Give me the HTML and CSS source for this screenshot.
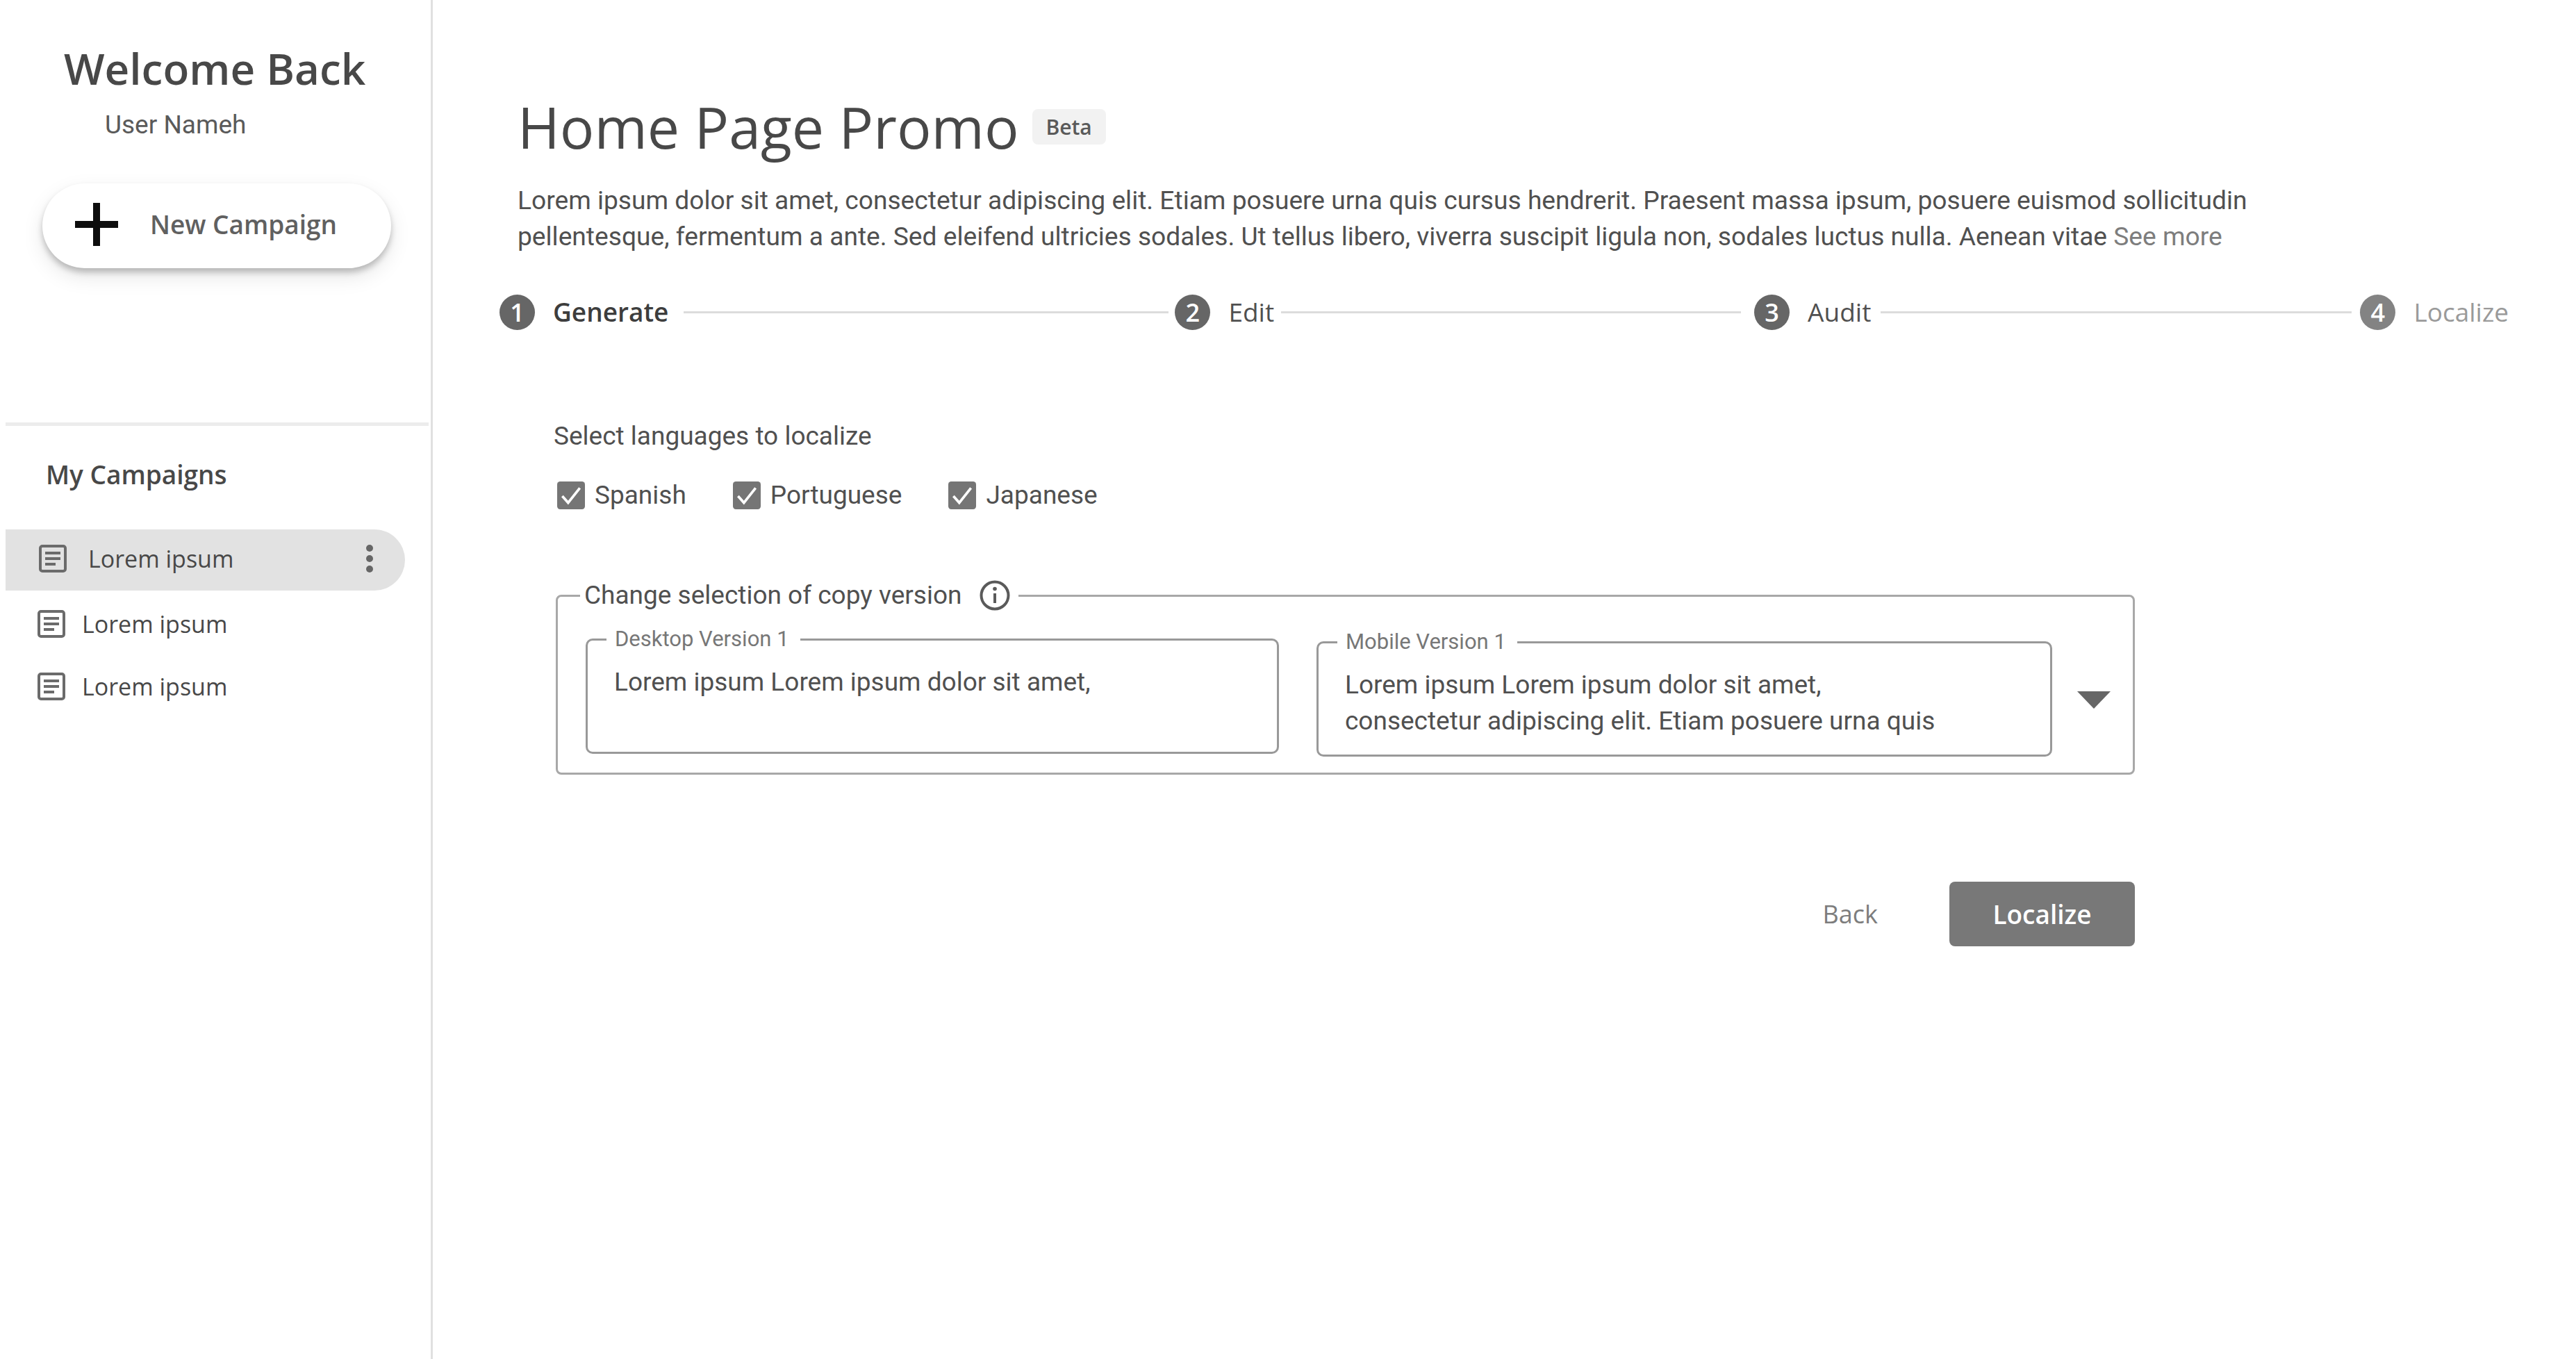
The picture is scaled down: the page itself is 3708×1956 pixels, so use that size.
FILE: index.html
```html
<!DOCTYPE html>
<html lang="en">
<head>
<meta charset="utf-8">
<title>Home Page Promo</title>
<link rel="stylesheet" href="styles.css">
</head>
<body>
<div class="app">
  <aside class="sidebar">
    <h2 class="welcome">Welcome Back</h2>
    <p class="user">User Nameh</p>
    <button class="new-btn">
      <svg class="plus" viewBox="0 0 62 62"><path d="M26 0h10v26h26v10H36v26H26V36H0V26h26z"/></svg>
      <span>New Campaign</span>
    </button>
    <hr class="side-rule">
    <h3 class="side-title">My Campaigns</h3>
    <ul class="campaigns">
      <li class="campaign active">
        <svg class="doc" viewBox="0 0 40 40"><rect x="2" y="2" width="36" height="36" rx="3"/><path d="M9 12h22M9 20h22M9 28h15"/></svg>
        <span>Lorem ipsum</span>
        <svg class="dots" viewBox="0 0 12 42"><circle cx="6" cy="6" r="5"/><circle cx="6" cy="21" r="5"/><circle cx="6" cy="36" r="5"/></svg>
      </li>
      <li class="campaign">
        <svg class="doc" viewBox="0 0 40 40"><rect x="2" y="2" width="36" height="36" rx="3"/><path d="M9 12h22M9 20h22M9 28h15"/></svg>
        <span>Lorem ipsum</span>
      </li>
      <li class="campaign">
        <svg class="doc" viewBox="0 0 40 40"><rect x="2" y="2" width="36" height="36" rx="3"/><path d="M9 12h22M9 20h22M9 28h15"/></svg>
        <span>Lorem ipsum</span>
      </li>
    </ul>
  </aside>
  <main class="main">
    <div class="title-row">
      <h1 class="title">Home Page Promo</h1>
      <span class="badge">Beta</span>
    </div>
    <p class="intro">Lorem ipsum dolor sit amet, consectetur adipiscing elit. Etiam posuere urna quis cursus hendrerit. Praesent massa ipsum, posuere euismod sollicitudin<br>pellentesque, fermentum a ante. Sed eleifend ultricies sodales. Ut tellus libero, viverra suscipit ligula non, sodales luctus nulla. Aenean vitae <a class="more">See more</a></p>
    <ol class="stepper">
      <li class="step current"><b class="num">1</b><span>Generate</span></li>
      <li class="line line-a"></li>
      <li class="step"><b class="num">2</b><span>Edit</span></li>
      <li class="line line-b"></li>
      <li class="step"><b class="num">3</b><span>Audit</span></li>
      <li class="line line-c"></li>
      <li class="step todo"><b class="num">4</b><span>Localize</span></li>
    </ol>
    <section class="panel">
      <p class="select-label">Select languages to localize</p>
      <div class="checks">
        <label class="check"><svg class="box" viewBox="0 0 38 38"><rect width="38" height="38" rx="4"/><path d="M7 20l8 9L31 9"/></svg>Spanish</label>
        <label class="check"><svg class="box" viewBox="0 0 38 38"><rect width="38" height="38" rx="4"/><path d="M7 20l8 9L31 9"/></svg>Portuguese</label>
        <label class="check"><svg class="box" viewBox="0 0 38 38"><rect width="38" height="38" rx="4"/><path d="M7 20l8 9L31 9"/></svg>Japanese</label>
      </div>
      <fieldset class="outer">
        <legend class="outer-legend">Change selection of copy version
          <svg class="info" viewBox="0 0 44 44"><circle cx="22" cy="22" r="19.5"/><path d="M22 19v14"/><circle class="info-dot" cx="22" cy="12.500" r="2.800"/></svg>
        </legend>
        <div class="versions">
          <fieldset class="field desktop">
            <legend class="field-legend">Desktop Version 1</legend>
            <p class="field-text">Lorem ipsum Lorem ipsum dolor sit amet,</p>
          </fieldset>
          <fieldset class="field mobile">
            <legend class="field-legend">Mobile Version 1</legend>
            <p class="field-text">Lorem ipsum Lorem ipsum dolor sit amet,<br>consectetur adipiscing elit. Etiam posuere urna quis</p>
          </fieldset>
          <span class="caret"></span>
        </div>
      </fieldset>
      <div class="actions">
        <button class="back">Back</button>
        <button class="primary">Localize</button>
      </div>
    </section>
  </main>
</div>
</body>
</html>
```
FILE: styles.css
```css
* { box-sizing: border-box; }
html, body { margin: 0; padding: 0; background: #fff; }
body { font-family: "Roboto", "Liberation Sans", sans-serif; color: #444; }
h1, h2, h3, p, ul, ol { margin: 0; padding: 0; list-style: none; }
button { font: inherit; border: 0; background: none; padding: 0; }

.app { display: flex; width: 3708px; height: 1956px; overflow: hidden; }

.sidebar { width: 623px; flex: none; border-right: 3px solid #e0e0e0; padding-top: 63px; }
.welcome { font: 600 62px/70px "Open Sans", sans-serif; color: #484848; padding-left: 92px; white-space: nowrap; }
.user { font: 400 37px/44px "Roboto", sans-serif; color: #5a5a5a; padding-left: 151px; margin-top: 25px; }
.new-btn { display: flex; align-items: center; width: 502px; height: 122px; margin: 62px 0 0 61px; padding: 0 0 4px 47px; border-radius: 61px; background: #fff; box-shadow: 0 6px 8px rgba(0,0,0,.22), 0 12px 30px rgba(0,0,0,.1); font: 600 37px/50px "Open Sans", sans-serif; color: #606060; }
.plus { width: 62px; height: 62px; fill: #0d0d0d; margin-right: 46px; flex: none; }
.side-rule { height: 5px; border: 0; background: #ececec; margin: 222px 3px 0 8px; }
.side-title { font: 600 37px/50px "Open Sans", sans-serif; color: #484848; margin: 45px 0 0 66px; }
.campaigns { margin-top: 54px; }
.campaign { display: flex; align-items: center; height: 90px; padding-left: 54px; font: 400 34px/44px "Open Sans", sans-serif; color: #484848; }
.campaign span { margin-left: 24px; }
.campaign.active { width: 575px; height: 88px; margin: 0 0 3px 8px; padding: 0 0 5px 48px; background: #e2e2e2; border-radius: 0 44px 44px 0; }
.campaign.active span { margin-left: 31px; }
.doc { width: 40px; height: 40px; flex: none; fill: none; stroke: #6b6b6b; stroke-width: 4; }
.dots { width: 12px; height: 42px; margin-left: auto; margin-right: 45px; fill: #666; }

.main { flex: 1; min-width: 0; padding: 133px 0 0 121px; position: relative; }
.title-row { display: flex; align-items: center; height: 98px; margin-left: 1px; }
.title { font: 400 82.500px/98px "Open Sans", sans-serif; color: #484848; white-space: nowrap; }
.badge { width: 106px; height: 51px; margin-left: 19px; border-radius: 8px; background: #f2f2f2; font: 600 30px/51px "Open Sans", sans-serif; color: #5a5a5a; text-align: center; }
.intro { width: 2700px; margin: 32px 0 0 1px; font-size: 37.170px; line-height: 51.500px; color: #505050; white-space: nowrap; }
.more { color: #7d7d7d; }

.stepper { display: flex; align-items: center; height: 52px; margin: 57px 0 0 -25px; }
.step { display: flex; align-items: center; font: 400 37px/50px "Open Sans", sans-serif; color: #505050; }
.step.current { font-weight: 600; color: #3d3d3d; }
.step.todo { color: #9a9a9a; }
.num { width: 51px; height: 51px; margin-right: 26px; border-radius: 50%; background: #666; color: #fff; font: 600 36px/51px "Open Sans", sans-serif; text-align: center; }
.todo .num { background: #838383; }
.line { height: 3px; background: #dcdcdc; }
.line-a { width: 698px; margin: 0 9px 0 22px; }
.line-b { width: 662px; margin: 0 19px 0 10px; }
.line-c { width: 678px; margin: 0 12px 0 14px; }

.panel { width: 2276px; margin-left: 53px; }
.select-label { font-size: 37px; line-height: 44px; color: #505050; margin-top: 131px; }
.checks { display: flex; margin: 41px 0 0 5px; font-size: 37px; line-height: 44px; color: #505050; }
.check { display: flex; align-items: center; margin-right: 67px; }
.box { width: 40px; height: 40px; margin-right: 14px; flex: none; }
.box rect { fill: #757575; }
.box path { fill: none; stroke: #fff; stroke-width: 3.500; }

.outer { width: 2273px; height: 280px; margin: 100px 0 0 3px; padding: 0 32px 0 40px; border: 3px solid #a8a8a8; border-radius: 8px; }
.outer-legend { display: flex; align-items: center; gap: 26px; height: 44px; margin-left: -8px; padding: 0 12px 0 6px; font-size: 37px; line-height: 44px; color: #505050; }
.info { width: 44px; height: 44px; fill: none; stroke: #5a5a5a; stroke-width: 4; flex: none; }
.info-dot { fill: #5a5a5a; stroke: none; }
.versions { display: flex; align-items: flex-start; margin-top: 23px; }
.field { margin: 0; padding: 0 38px; border: 3px solid #999; border-radius: 10px; height: 183px; flex: none; }
.desktop { width: 998px; }
.mobile { width: 1059px; margin: 4px 0 0 54px; }
.field-legend { height: 36px; margin-left: -11px; padding: 0 16px 0 12px; font-size: 31px; line-height: 36px; color: #777; }
.field-text { font-size: 37px; line-height: 51.500px; color: #505050; margin-top: 18px; white-space: nowrap; }
.caret { width: 0; height: 0; margin: 93px 0 0 36px; border-style: solid; border-width: 25px 24px 0; border-color: #666 transparent transparent; }

.actions { display: flex; justify-content: flex-end; align-items: center; margin-top: 154px; }
.back { font: 400 36px/50px "Open Sans", sans-serif; color: #7d7d7d; margin-right: 103px; }
.primary { width: 267px; height: 93px; border-radius: 8px; background: #787878; color: #fff; font: 600 37px/50px "Open Sans", sans-serif; }
```
